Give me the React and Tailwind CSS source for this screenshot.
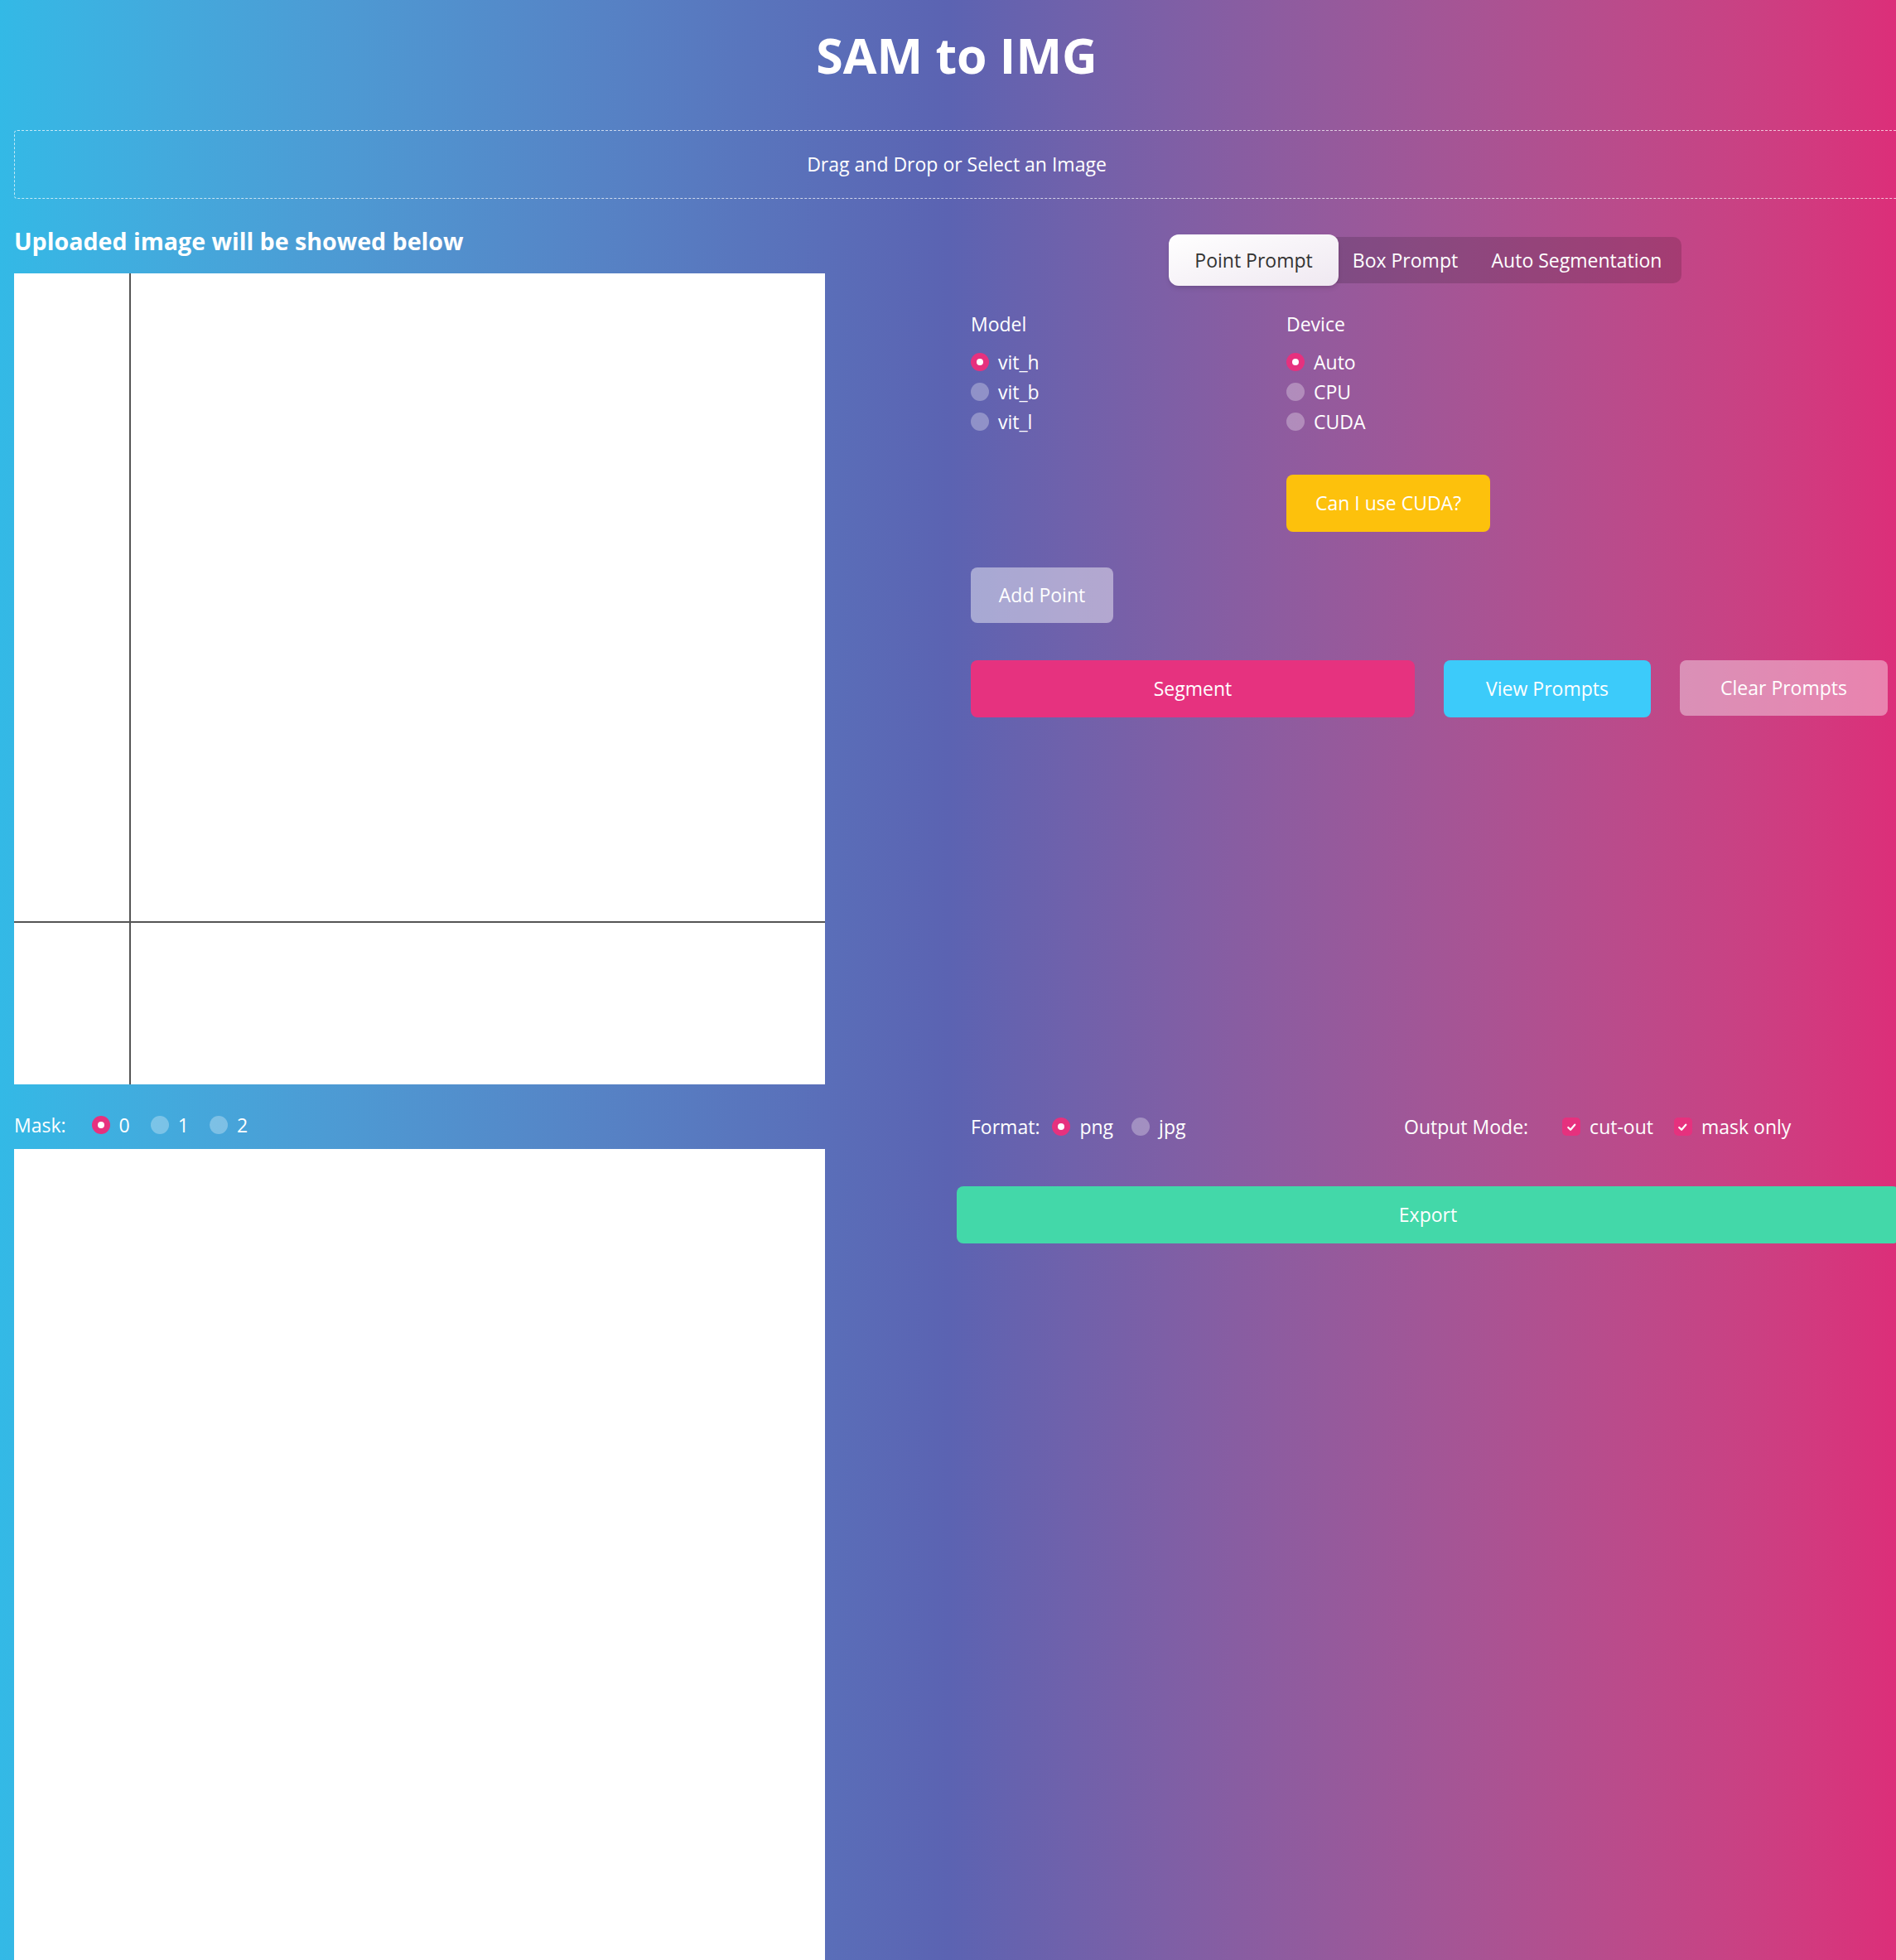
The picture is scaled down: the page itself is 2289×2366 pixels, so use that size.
import React from "react";

function Radio({ checked }) {
  return checked ? (
    <span className="flex h-[22px] w-[22px] shrink-0 items-center justify-center rounded-full bg-[#e6317e]">
      <span className="h-[8px] w-[8px] rounded-full bg-white" />
    </span>
  ) : (
    <span className="h-[22px] w-[22px] shrink-0 rounded-full bg-white/30" />
  );
}

function Check() {
  return (
    <span className="flex h-[22px] w-[22px] shrink-0 items-center justify-center rounded-[5px] bg-[#e6317e]">
      <svg viewBox="0 0 16 16" className="h-[15px] w-[15px]">
        <path
          d="M3.5 8.5l3 3 5.5-6.5"
          stroke="white"
          strokeWidth="2.4"
          fill="none"
          strokeLinecap="round"
          strokeLinejoin="round"
        />
      </svg>
    </span>
  );
}

function Option({ checked, label }) {
  return (
    <div className="flex h-[36px] items-center gap-[11px]">
      <Radio checked={checked} />
      <span>{label}</span>
    </div>
  );
}

export default function App() {
  return (
    <div className="min-h-screen w-full overflow-hidden bg-linear-to-r from-[#33b9e6] via-[#5b63b2] via-50% to-[#dc2e79] font-['Open_Sans',sans-serif] text-[23px] text-white">
      <div className="ml-[17px] w-[2276px]">
        <h1 className="pt-[30px] text-center text-[59px] font-bold leading-[72px]">SAM to IMG</h1>

        {/* drop zone */}
        <div className="mt-[55px] flex h-[83px] items-center justify-center rounded-[4px] border border-dashed border-white/70">
          Drag and Drop or Select an Image
        </div>

        <div className="mt-[33px] grid grid-cols-2">
          {/* -- left: uploaded image -- */}
          <div>
            <h2 className="text-[28.6px] font-bold leading-[36px]">Uploaded image will be showed below</h2>
            <div className="mt-[21px] h-[979px] w-[979px] bg-white">
              <svg width="979" height="979" className="block">
                <line x1="140" y1="0" x2="140" y2="979" stroke="#555" strokeWidth="2" />
                <line x1="0" y1="783" x2="979" y2="783" stroke="#555" strokeWidth="2" />
              </svg>
            </div>
          </div>

          {/* -- right: controls -- */}
          <div className="pl-[17px] pr-[14px]">
            <div className="mt-[13px] flex justify-center pr-[10px]">
              <div className="flex h-[56px] items-center rounded-[10px] bg-black/15">
                <div className="-my-[3px] flex h-[62px] w-[205px] items-center justify-center rounded-[12px] bg-linear-to-br from-white to-[#efe8f1] text-[#333] shadow-md">
                  Point Prompt
                </div>
                <div className="flex w-[161px] justify-center">Box Prompt</div>
                <div className="flex w-[253px] justify-center">Auto Segmentation</div>
              </div>
            </div>

            <div className="mt-[33px] flex">
              <div className="w-[381px]">
                <div className="leading-[32px]">Model</div>
                <div className="mt-[12px]">
                  <Option checked label="vit_h" />
                  <Option label="vit_b" />
                  <Option label="vit_l" />
                </div>
              </div>
              <div>
                <div className="leading-[32px]">Device</div>
                <div className="mt-[12px]">
                  <Option checked label="Auto" />
                  <Option label="CPU" />
                  <Option label="CUDA" />
                </div>
                <button className="mt-[46px] flex h-[69px] w-[246px] items-center justify-center rounded-[8px] bg-[#fdc10c]">
                  Can I use CUDA?
                </button>
              </div>
            </div>

            <button className="mt-[43px] flex h-[67px] w-[172px] items-center justify-center rounded-[8px] bg-white/45">
              Add Point
            </button>

            <div className="mt-[45px] flex gap-[35px]">
              <button className="flex h-[69px] flex-1 items-center justify-center rounded-[8px] bg-[#e6327f]">
                Segment
              </button>
              <button className="flex h-[69px] w-[250px] items-center justify-center rounded-[8px] bg-[#3ccbfa]">
                View Prompts
              </button>
              <button className="flex h-[67px] w-[251px] items-center justify-center rounded-[8px] bg-white/40">
                Clear Prompts
              </button>
            </div>
          </div>

          {/* -- left: mask picker + result -- */}
          <div>
            <div className="mt-[31px] flex h-[36px] items-center">
              <span className="mr-[31px]">Mask:</span>
              <div className="flex items-center gap-[25px]">
                <Option checked label="0" />
                <Option label="1" />
                <Option label="2" />
              </div>
            </div>
            <div className="mt-[11px] h-[979px] w-[979px] bg-white" />
          </div>

          {/* -- right: export -- */}
          <div>
            <div className="mt-[33px] flex h-[36px] items-center pl-[17px]">
              <div className="flex w-[523px] items-center">
                <span className="mr-[15px]">Format:</span>
                <div className="flex items-center gap-[22px]">
                  <Option checked label="png" />
                  <Option label="jpg" />
                </div>
              </div>
              <span className="mr-[41px]">Output Mode:</span>
              <div className="flex items-center gap-[25px]">
                <div className="flex items-center gap-[11px]">
                  <Check />
                  <span>cut-out</span>
                </div>
                <div className="flex items-center gap-[11px]">
                  <Check />
                  <span>mask only</span>
                </div>
              </div>
            </div>
            <button className="mt-[54px] flex h-[69px] w-full items-center justify-center rounded-[8px] bg-[#43d8a9]">
              Export
            </button>
          </div>
        </div>
      </div>
    </div>
  );
}
